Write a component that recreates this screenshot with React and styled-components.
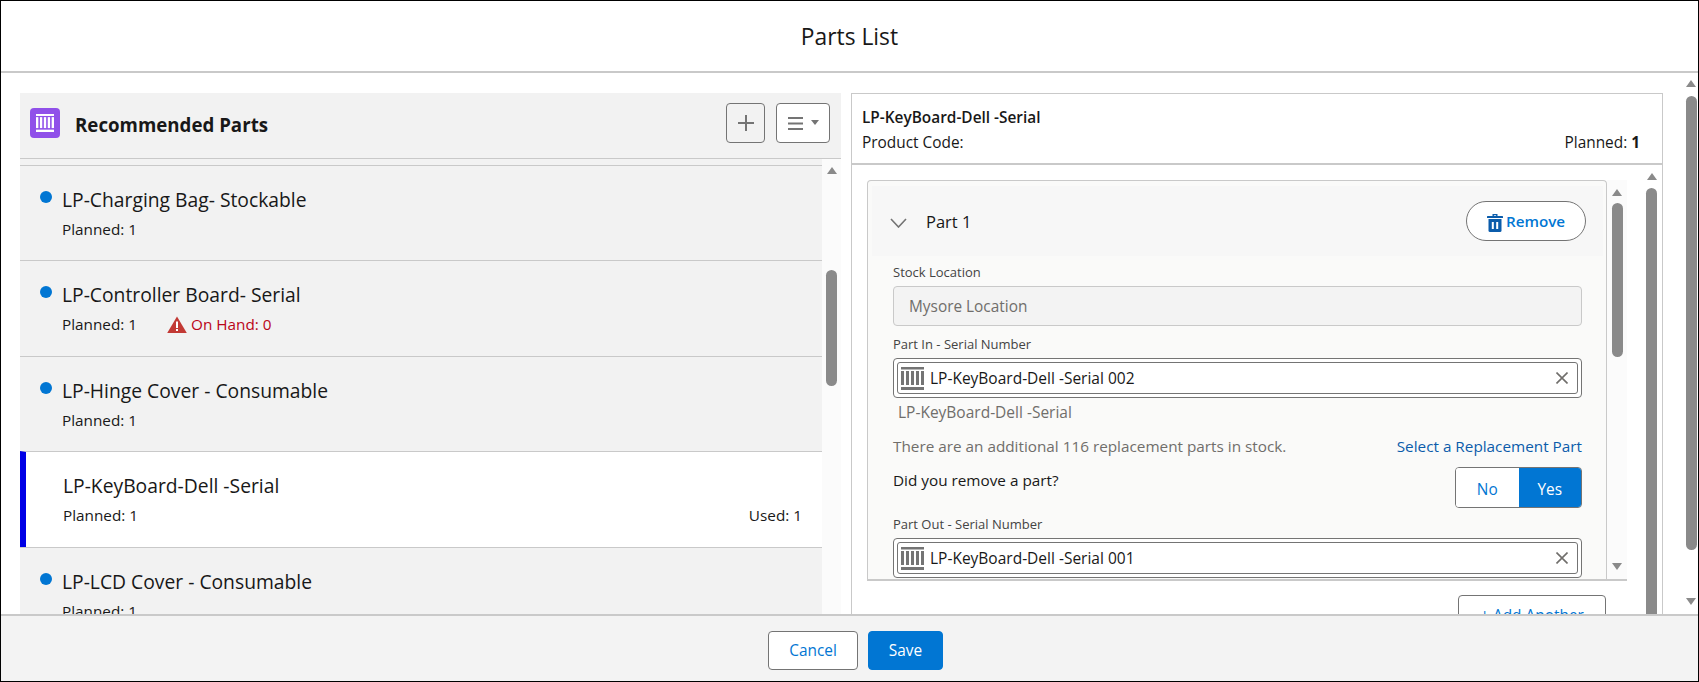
import React from 'react';
import styled, { createGlobalStyle } from 'styled-components';

const GlobalStyle = createGlobalStyle`
    * {
        box-sizing: border-box;
    }
    html,
    body {
        margin: 0;
        padding: 0;
        background: #fff;
    }
    body {
        font-family: 'Open Sans', 'Noto Sans', Arial, sans-serif;
        color: #181818;
    }
`;

const Modal = styled('div')`
    width: 1699px;
    height: 682px;
    border: 1px solid #000;
    display: flex;
    flex-direction: column;
    overflow: hidden;
    background: #fff;
`;

const ModalHeader = styled('header')`
    flex: 0 0 72px;
    border-bottom: 2px solid #c9c9c9;
    display: flex;
    align-items: center;
    justify-content: center;
    font-size: 22.8px;
`;

const ModalBody = styled('div')`
    flex: 1;
    min-height: 0;
    display: flex;
`;

const Main = styled('div')`
    flex: 1;
    min-width: 0;
    overflow: hidden;
    padding: 20px 18px 0 19px;
    display: flex;
    align-items: flex-start;
    gap: 10px;
`;

const ModalFooter = styled('footer')`
    flex: 0 0 67px;
    border-top: 2px solid #c9c9c9;
    background: #f3f3f3;
    display: flex;
    justify-content: center;
    align-items: flex-start;
    gap: 10px;
    padding: 15px 0 0 12px;
`;

const Track = styled('div')`
    flex: 0 0 ${(p) => p.$width}px;
    height: ${(p) => p.$height}px;
    background: ${(p) => p.$bg || '#fff'};
    display: flex;
    flex-direction: column;
    align-items: center;
    padding-top: ${(p) => p.$pad}px;
    padding-left: ${(p) => p.$left || 0}px;
`;

const ArrowUp = styled('span')`
    width: 0;
    height: 0;
    border-left: 5px solid transparent;
    border-right: 5px solid transparent;
    border-bottom: 7px solid #8a8a8a;
`;

const ArrowDown = styled(ArrowUp)`
    border-bottom: 0;
    border-top: 7px solid #8a8a8a;
    margin-top: auto;
    margin-bottom: ${(p) => p.$bottom}px;
`;

const Thumb = styled('span')`
    width: 11px;
    height: ${(p) => p.$height}px;
    margin-top: ${(p) => p.$top}px;
    background: #8a8a8a;
    border-radius: 6px;
    flex: none;
`;

const LeftPanel = styled('section')`
    flex: 0 0 821px;
    background: #f2f2f2;
`;

const PanelHeader = styled('div')`
    height: 66px;
    border-bottom: 1px solid #c9c9c9;
    display: flex;
    align-items: center;
    padding: 0 11px 5px 10px;
`;

const PanelIcon = styled('span')`
    width: 30px;
    height: 30px;
    border-radius: 4px;
    background: #9050e9;
    display: flex;
    align-items: center;
    justify-content: center;
`;

const PanelTitle = styled('h2')`
    flex: 1;
    margin: 4px 0 0 15px;
    font-size: 18.7px;
    line-height: 24px;
    font-weight: 700;
`;

const IconButton = styled('button')`
    height: 40px;
    width: ${(p) => p.$width}px;
    margin-left: ${(p) => p.$gap || 0}px;
    border: 1px solid #747474;
    border-radius: 4px;
    background: ${(p) => p.$bg || 'transparent'};
    padding: 0;
    display: flex;
    align-items: center;
    justify-content: center;
    gap: 8px;
`;

const ListArea = styled('div')`
    display: flex;
`;

const List = styled('div')`
    flex: 1;
    padding-top: 6px;
`;

const Row = styled('div')`
    height: 95.4px;
    border-top: 1px solid #c9c9c9;
    padding-top: 22px;
    padding-left: ${(p) => (p.$selected ? '37px' : '20px')};
    padding-right: 20px;
    display: flex;
    background: ${(p) => (p.$selected ? '#fff' : 'transparent')};
    border-left: ${(p) => (p.$selected ? '6px solid #0000e6' : '0')};
`;

const Dot = styled('span')`
    flex: none;
    width: 12px;
    height: 12px;
    border-radius: 50%;
    background: #0176d3;
    margin: 3px 10px 0 0;
`;

const RowContent = styled('div')`
    flex: 1;
    min-width: 0;
`;

const RowTitle = styled('div')`
    font-size: 19.3px;
    line-height: 24px;
`;

const RowMeta = styled('div')`
    font-size: 15.3px;
    line-height: 20px;
    margin-top: 7px;
    display: flex;
    align-items: center;
`;

const OnHand = styled('span')`
    display: flex;
    align-items: center;
    gap: 4px;
    margin-left: 30px;
    color: #ba0517;
`;

const Used = styled('span')`
    margin-left: auto;
`;

const RightPanel = styled('section')`
    flex: 0 0 812px;
    border: 1px solid #c9c9c9;
    border-bottom: 0;
    background: #fff;
`;

const ProductHeader = styled('div')`
    height: 71px;
    border-bottom: 2px solid #c9c9c9;
    padding: 14px 22px 0 10px;
    font-size: 15.4px;
    line-height: 20px;
`;

const ProductName = styled('div')`
    font-weight: 600;
`;

const ProductMeta = styled('div')`
    margin-top: 5px;
    display: flex;
    justify-content: space-between;

    b {
        font-weight: 700;
    }
`;

const ProductBody = styled('div')`
    display: flex;
`;

const PartsColumn = styled('div')`
    flex: 0 0 775px;
    padding: 15px 0 0 15px;
`;

const CardScroll = styled('div')`
    display: flex;
    height: 399px;
`;

const Card = styled('div')`
    flex: 1;
    min-width: 0;
    border: 1px solid #c9c9c9;
    border-bottom: 0;
    border-radius: 4px 4px 0 0;
    background: #fafaf9;
    overflow: hidden;
`;

const PartHeader = styled('div')`
    height: 70px;
    margin: 5px 3px 0 4px;
    background: #f7f7f7;
    display: flex;
    align-items: center;
    padding: 0 17px 0 18px;

    svg:first-child {
        margin-top: 3px;
    }
`;

const PartTitle = styled('div')`
    flex: 1;
    margin: 1px 0 0 19px;
    font-size: 16.5px;
`;

const RemoveButton = styled('button')`
    width: 120px;
    height: 40px;
    border: 1px solid #747474;
    border-radius: 20px;
    background: #fff;
    color: #0176d3;
    font: inherit;
    font-size: 15.2px;
    font-weight: 600;
    display: flex;
    align-items: center;
    justify-content: center;
    gap: 3px;
    padding: 0;
`;

const Form = styled('div')`
    padding: 7px 24px 0 25px;
`;

const FieldLabel = styled('div')`
    font-size: 13px;
    line-height: 18px;
    color: #444;
    margin-top: ${(p) => p.$top || 0}px;
    margin-bottom: 5px;
`;

const DisabledInput = styled('div')`
    height: 40px;
    border: 1px solid #c9c9c9;
    border-radius: 4px;
    background: #f3f3f3;
    color: #706e6b;
    font-size: 15.4px;
    display: flex;
    align-items: center;
    padding-left: 15px;
`;

const LookupOuter = styled('div')`
    height: 40px;
    border: 1px solid #747474;
    border-radius: 4px;
    padding: 3px;
    background: #fff;
`;

const LookupInner = styled('div')`
    height: 100%;
    border: 1px solid #747474;
    border-radius: 3px;
    display: flex;
    align-items: center;
    padding: 0 9px 0 3px;
    gap: 6px;
    font-size: 15.5px;
`;

const LookupText = styled('span')`
    flex: 1;
`;

const SubText = styled('div')`
    font-size: 15.5px;
    line-height: 20px;
    color: #706e6b;
    margin: 4px 0 0 5px;
`;

const StockRow = styled('div')`
    margin-top: 14px;
    display: flex;
    justify-content: space-between;
    font-size: 15.3px;
    line-height: 20px;
    color: #706e6b;
`;

const LinkText = styled('span')`
    color: #0b5cab;
`;

const RemovedRow = styled('div')`
    margin-top: 11px;
    height: 41px;
    display: flex;
    justify-content: space-between;
    font-size: 15.3px;
    line-height: 20px;
    padding-top: 3px;
`;

const Toggle = styled('div')`
    margin-top: -3px;
    width: 127px;
    height: 41px;
    border: 1px solid #747474;
    border-radius: 4px;
    display: flex;
    overflow: hidden;
`;

const ToggleOption = styled('div')`
    flex: 1;
    display: flex;
    align-items: center;
    justify-content: center;
    padding-top: 4px;
    font-size: 15.4px;
    background: ${(p) => (p.$active ? '#0176d3' : '#fff')};
    color: ${(p) => (p.$active ? '#fff' : '#0176d3')};
`;

const CardFooter = styled('div')`
    border-top: 2px solid #c9c9c9;
    display: flex;
    justify-content: flex-end;
    padding: 14px 21px 0 0;
    background: #fff;
`;

const AddButton = styled('button')`
    width: 148px;
    height: 40px;
    border: 1px solid #747474;
    border-radius: 4px;
    background: #fff;
    color: #0176d3;
    font: inherit;
    font-size: 15.4px;
`;

const FooterButton = styled('button')`
    width: ${(p) => p.$width}px;
    height: 39px;
    border: 1px solid ${(p) => (p.$primary ? '#0176d3' : '#747474')};
    border-radius: 4px;
    background: ${(p) => (p.$primary ? '#0176d3' : '#fff')};
    color: ${(p) => (p.$primary ? '#fff' : '#0176d3')};
    font: inherit;
    font-size: 15.4px;
    padding: 0;
`;

const ProductGlyph = ({ width, height, color }) => (
    <svg width={width} height={height} viewBox="0 0 23 23" fill={color}>
        <rect x="0" y="0" width="23" height="2.5" />
        <rect x="0" y="20" width="23" height="3" />
        <rect x="0" y="4" width="3" height="14" />
        <rect x="5" y="4" width="3" height="14" />
        <rect x="10" y="4" width="3" height="14" />
        <rect x="15" y="4" width="3" height="14" />
        <rect x="20" y="4" width="3" height="14" />
    </svg>
);

const PlusGlyph = () => (
    <svg width="16" height="16" viewBox="0 0 16 16" stroke="#747474" strokeWidth="2">
        <path d="M8 0v16M0 8h16" />
    </svg>
);

const MenuGlyph = () => (
    <svg width="15" height="13" viewBox="0 0 15 13" fill="#747474">
        <rect y="0" width="15" height="2" />
        <rect y="5.5" width="15" height="2" />
        <rect y="11" width="15" height="2" />
    </svg>
);

const CaretGlyph = () => (
    <svg width="8" height="6" viewBox="0 0 8 6" fill="#747474">
        <path d="M0 0h8L4 5z" />
    </svg>
);

const WarningGlyph = () => (
    <svg width="20" height="17" viewBox="0 0 20 17">
        <path d="M10 0.5 L19.8 17 H0.2 Z" fill="#c23934" />
        <rect x="9" y="5.5" width="2" height="6.5" fill="#fff" />
        <rect x="9" y="13" width="2" height="2" fill="#fff" />
    </svg>
);

const ChevronGlyph = () => (
    <svg width="17" height="10" viewBox="0 0 17 10" fill="none" stroke="#747474" strokeWidth="1.6">
        <path d="M1 1l7.5 8L16 1" />
    </svg>
);

const TrashGlyph = () => (
    <svg width="16" height="19" viewBox="0 0 16 19" fill="#0b5cab">
        <rect x="0" y="3" width="16" height="2" rx="0.5" />
        <path d="M5.5 3V1h5v2h-1.4V2.2H6.9V3z" />
        <path d="M1.5 6h13v11.5a1.5 1.5 0 0 1-1.5 1.5H3a1.5 1.5 0 0 1-1.5-1.5z" />
        <rect x="4.8" y="9" width="2" height="7" fill="#fff" />
        <rect x="9.2" y="9" width="2" height="7" fill="#fff" />
    </svg>
);

const ClearGlyph = () => (
    <svg width="12" height="12" viewBox="0 0 12 12" stroke="#706e6b" strokeWidth="1.6">
        <path d="M0.5 0.5l11 11M11.5 0.5l-11 11" />
    </svg>
);

const parts = [
    { name: 'LP-Charging Bag- Stockable', dot: true },
    { name: 'LP-Controller Board- Serial', dot: true, onHand: 0 },
    { name: 'LP-Hinge Cover - Consumable', dot: true },
    { name: 'LP-KeyBoard-Dell -Serial', selected: true, used: 1 },
    { name: 'LP-LCD Cover - Consumable', dot: true },
];

const Lookup = ({ value }) => (
    <LookupOuter>
        <LookupInner>
            <ProductGlyph width={23} height={23} color="#747474" />
            <LookupText>{value}</LookupText>
            <ClearGlyph />
        </LookupInner>
    </LookupOuter>
);

const App = () => (
    <Modal>
        <GlobalStyle />
        <ModalHeader>Parts List</ModalHeader>
        <ModalBody>
            <Main>
                <LeftPanel>
                    <PanelHeader>
                        <PanelIcon>
                            <ProductGlyph width={18} height={18} color="#fff" />
                        </PanelIcon>
                        <PanelTitle>Recommended Parts</PanelTitle>
                        <IconButton $width={39}>
                            <PlusGlyph />
                        </IconButton>
                        <IconButton $width={54} $gap={11} $bg="#fff">
                            <MenuGlyph />
                            <CaretGlyph />
                        </IconButton>
                    </PanelHeader>
                    <ListArea>
                        <List>
                            {parts.map((part) => (
                                <Row key={part.name} $selected={part.selected}>
                                    {part.dot && <Dot />}
                                    <RowContent>
                                        <RowTitle>{part.name}</RowTitle>
                                        <RowMeta>
                                            Planned: 1
                                            {part.onHand !== undefined && (
                                                <OnHand>
                                                    <WarningGlyph />
                                                    On Hand: {part.onHand}
                                                </OnHand>
                                            )}
                                            {part.used && <Used>Used: {part.used}</Used>}
                                        </RowMeta>
                                    </RowContent>
                                </Row>
                            ))}
                        </List>
                        <Track $width={19} $height={456} $pad={8} $bg="#fbfbfb">
                            <ArrowUp />
                            <Thumb $top={96} $height={116} />
                        </Track>
                    </ListArea>
                </LeftPanel>
                <RightPanel>
                    <ProductHeader>
                        <ProductName>LP-KeyBoard-Dell -Serial</ProductName>
                        <ProductMeta>
                            <span>Product Code:</span>
                            <span>
                                Planned: <b>1</b>
                            </span>
                        </ProductMeta>
                    </ProductHeader>
                    <ProductBody>
                        <PartsColumn>
                            <CardScroll>
                                <Card>
                                    <PartHeader>
                                        <ChevronGlyph />
                                        <PartTitle>Part 1</PartTitle>
                                        <RemoveButton>
                                            <TrashGlyph />
                                            Remove
                                        </RemoveButton>
                                    </PartHeader>
                                    <Form>
                                        <FieldLabel>Stock Location</FieldLabel>
                                        <DisabledInput>Mysore Location</DisabledInput>
                                        <FieldLabel $top={9}>Part In - Serial Number</FieldLabel>
                                        <Lookup value="LP-KeyBoard-Dell -Serial 002" />
                                        <SubText>LP-KeyBoard-Dell -Serial</SubText>
                                        <StockRow>
                                            <span>There are an additional 116 replacement parts in stock.</span>
                                            <LinkText>Select a Replacement Part</LinkText>
                                        </StockRow>
                                        <RemovedRow>
                                            <span>Did you remove a part?</span>
                                            <Toggle>
                                                <ToggleOption>No</ToggleOption>
                                                <ToggleOption $active>Yes</ToggleOption>
                                            </Toggle>
                                        </RemovedRow>
                                        <FieldLabel $top={7}>Part Out - Serial Number</FieldLabel>
                                        <Lookup value="LP-KeyBoard-Dell -Serial 001" />
                                    </Form>
                                </Card>
                                <Track $width={20} $height={399} $pad={9} $bg="#fbfbfb">
                                    <ArrowUp />
                                    <Thumb $top={7} $height={154} />
                                    <ArrowDown $bottom={9} />
                                </Track>
                            </CardScroll>
                            <CardFooter>
                                <AddButton>+ Add Another</AddButton>
                            </CardFooter>
                        </PartsColumn>
                        <Track $width={35} $height={460} $pad={8} $left={14}>
                            <ArrowUp />
                            <Thumb $top={8} $height={440} />
                        </Track>
                    </ProductBody>
                </RightPanel>
            </Main>
            <Track $width={17} $height={541} $pad={7} $left={3}>
                <ArrowUp />
                <Thumb $top={9} $height={454} />
                <ArrowDown $bottom={9} />
            </Track>
        </ModalBody>
        <ModalFooter>
            <FooterButton $width={90}>Cancel</FooterButton>
            <FooterButton $width={75} $primary>
                Save
            </FooterButton>
        </ModalFooter>
    </Modal>
);

export default App;
